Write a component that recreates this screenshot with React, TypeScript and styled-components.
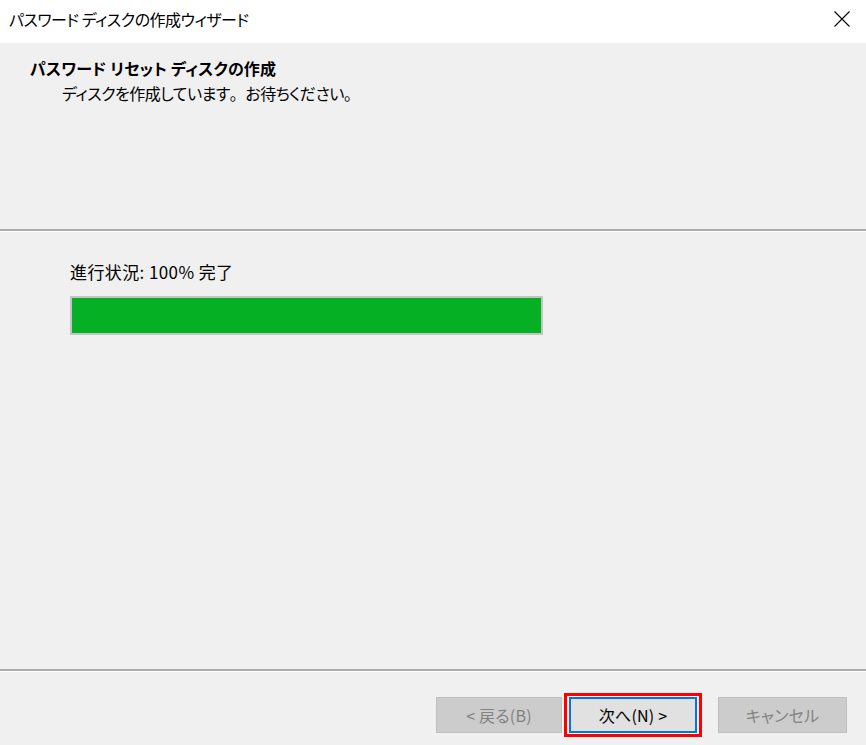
import React from "react";
import styled, { createGlobalStyle } from "styled-components";

const Global = createGlobalStyle`
  html, body { margin: 0; padding: 0; }
  body {
    background: #f0f0f0;
    font-family: "Noto Sans CJK JP", "Noto Sans", sans-serif;
    font-feature-settings: "palt";
    color: #000;
  }
`;

const Window = styled.div`
  width: 866px;
  height: 745px;
  display: flex;
  flex-direction: column;
  background: #f0f0f0;
  overflow: hidden;
`;

const TitleBar = styled.div`
  height: 43px;
  flex: none;
  background: #fff;
  display: flex;
  align-items: center;
  justify-content: space-between;
  padding: 0 14px 0 9px;
  box-sizing: border-box;
`;

const TitleText = styled.div`
  font-size: 16px;
  line-height: 20px;
  margin-top: -6px;
  letter-spacing: -0.5px;
`;

const CloseIcon = styled.svg`
  width: 20px;
  height: 20px;
  margin-top: -5px;
`;

const Header = styled.div`
  height: 186px;
  flex: none;
  padding: 14px 0 0 30px;
  box-sizing: border-box;
`;

const HeaderTitle = styled.div`
  font-size: 16px;
  font-weight: 700;
  line-height: 22px;
  letter-spacing: 0.2px;
`;

const HeaderSub = styled.div`
  font-size: 16px;
  line-height: 22px;
  padding-left: 32px;
  margin-top: 3px;
  letter-spacing: -0.5px;
`;

const FullPunct = styled.span`
  font-feature-settings: normal;
`;

const Separator = styled.div`
  flex: none;
  height: 0;
  border-top: 2px solid #adadad;
  border-bottom: 1px solid #ffffff;
`;

const Content = styled.div`
  flex: 1;
  padding: 28px 0 0 70px;
  box-sizing: border-box;
`;

const ProgressLabel = styled.div`
  font-size: 17px;
  line-height: 24px;
  letter-spacing: 0.4px;
  margin-bottom: 12px;
`;

const ProgressTrack = styled.div`
  width: 473px;
  height: 39px;
  box-sizing: border-box;
  border: 2px solid #c4c4c4;
  background: #e6e6e6;
`;

const ProgressFill = styled.div`
  height: 100%;
  background: #06b025;
`;

const Footer = styled.div`
  flex: none;
  height: 73px;
  box-sizing: border-box;
  padding: 25px 19px 0 0;
  display: flex;
  justify-content: flex-end;
  align-items: flex-start;
`;

const Button = styled.button<{ $w: number; $primary?: boolean }>`
  width: ${(p) => p.$w}px;
  height: 36px;
  box-sizing: border-box;
  font-family: inherit;
  font-feature-settings: "palt";
  font-size: 16px;
  letter-spacing: 0.2px;
  padding: 0;
  margin: 0;
  border: ${(p) => (p.$primary ? "2px solid #0078d7" : "1px solid #bfbfbf")};
  background: ${(p) => (p.$primary ? "#e1e1e1" : "#cccccc")};
  color: ${(p) => (p.$primary ? "#000" : "#838383")};
  display: flex;
  align-items: center;
  justify-content: center;
`;

const Highlight = styled.div`
  position: relative;
  margin: 0 21px 0 7px;
`;

const RedBox = styled.div`
  position: absolute;
  top: -4px;
  left: -5px;
  right: -5px;
  bottom: -4px;
  border: 3px solid #ff0000;
  pointer-events: none;
`;

export default function App() {
  const progress = 100;
  return (
    <>
      <Global />
      <Window>
        <TitleBar>
          <TitleText>パスワード ディスクの作成ウィザード</TitleText>
          <CloseIcon viewBox="0 0 20 20">
            <path d="M2.5 2.5 L17.5 17.5 M17.5 2.5 L2.5 17.5" stroke="#000" strokeWidth="1.1" fill="none" />
          </CloseIcon>
        </TitleBar>
        <Header>
          <HeaderTitle>パスワード リセット ディスクの作成</HeaderTitle>
          <HeaderSub>
            ディスクを作成しています<FullPunct>。</FullPunct>お待ちください<FullPunct>。</FullPunct>
          </HeaderSub>
        </Header>
        <Separator />
        <Content>
          <ProgressLabel>進行状況: {progress}% 完了</ProgressLabel>
          <ProgressTrack>
            <ProgressFill style={{ width: `${progress}%` }} />
          </ProgressTrack>
        </Content>
        <Separator />
        <Footer>
          <Button $w={126} disabled>
            &lt; 戻る(B)
          </Button>
          <Highlight>
            <Button $w={128} $primary>
              次へ(N) &gt;
            </Button>
            <RedBox />
          </Highlight>
          <Button $w={129} disabled>
            キャンセル
          </Button>
        </Footer>
      </Window>
    </>
  );
}
